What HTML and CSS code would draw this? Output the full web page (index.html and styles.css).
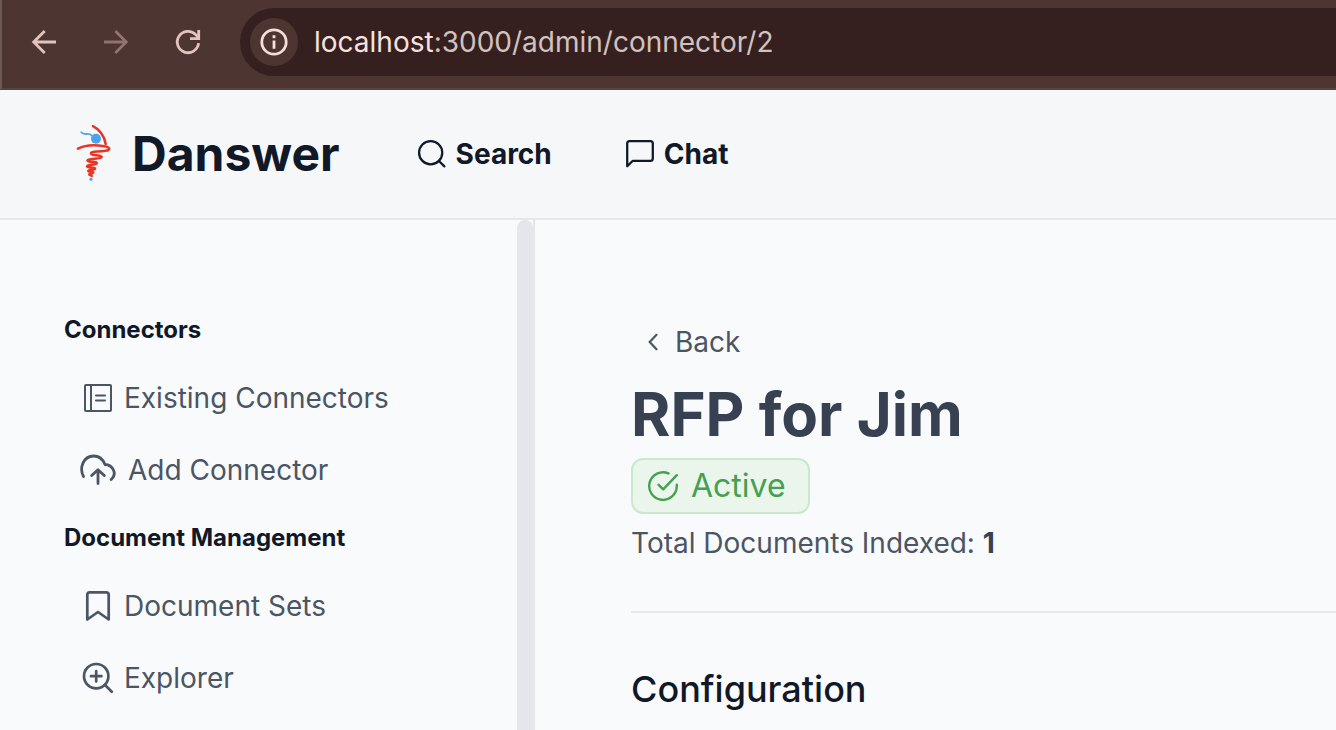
FILE: index.html
```html
<!DOCTYPE html>
<html lang="en">
<head>
<meta charset="utf-8">
<meta name="viewport" content="width=device-width, initial-scale=1">
<title>RFP for Jim - Danswer</title>
<link rel="stylesheet" href="styles.css">
</head>
<body>
<div class="browser-bar">
  <button class="browser-button" type="button" aria-label="Back">
    <svg width="28" height="28" viewBox="0 0 28 28" fill="none" stroke="currentColor" stroke-width="2.8"><path d="M26 14H4M14.700 3L3.700 14l11 11"/></svg>
  </button>
  <button class="browser-button browser-button-disabled" type="button" aria-label="Forward" disabled>
    <svg width="28" height="28" viewBox="0 0 28 28" fill="none" stroke="currentColor" stroke-width="2.8"><path d="M2 14h22M13.300 3l11 11-11 11"/></svg>
  </button>
  <button class="browser-button" type="button" aria-label="Reload">
    <svg width="28" height="28" viewBox="0 0 28 28" fill="none" stroke="currentColor" stroke-width="2.8"><path d="M24.600 15.200A10.700 10.700 0 1 1 21.700 6.600L24.500 9.500M24.700 2v8.700H16"/></svg>
  </button>
  <div class="address-bar">
    <button class="site-info" type="button" aria-label="Site information">
      <svg width="28" height="28" viewBox="0 0 28 28" fill="none" stroke="currentColor" stroke-width="2.8"><circle cx="14" cy="14" r="12.200"/><path d="M14 12.500v8.300"/><path d="M14 7.200v3"/></svg>
    </button>
    <div class="url" role="textbox" aria-label="Address" contenteditable="true" spellcheck="false"><span class="url-host">localhost</span>:3000/admin/connector/2</div>
  </div>
</div>

<header class="header">
  <a class="brand" href="#">
    <svg width="36" height="60" viewBox="0 0 36 60" fill="none" stroke-linecap="round" stroke-linejoin="round" aria-hidden="true">
      <path d="M3.300 8.300c1.500 2 3.500 1.900 5.200 1.700s3.500 0 5.500 1.600" stroke="#4ba3ee" stroke-width="1.800"/>
      <circle cx="18" cy="14.700" r="5" fill="#4ba3ee"/>
      <path d="M15 2.200C21.500 5.500 26 11.500 27.700 20" stroke="#ea3323" stroke-width="2.600"/>
      <path d="M0 24.600C7 21 18 20.800 26 22.200c7 1.200 6.500 4 1.500 4.600-5 .6-14.500.6-14.500 2.600 0 2.300 10.700 1.500 10.700 3.700 0 2.400-14.200 1-14.200 3.300 0 2.100 9.300.8 9.300 2.700 0 2.200-9.700 1.200-9.700 3.200 0 1.700 8 .8 8 2.400 0 1.500-6.800.8-6.800 2.300 0 1.200 5 .4 5 1.500s-4 .8-4 1.900c0 .9 2.400.4 2.400 1.500" stroke="#ea3323" stroke-width="2.600"/>
      <circle cx="13" cy="55.200" r="1.600" fill="#4ba3ee"/>
    </svg>
    <span class="brand-name">Danswer</span>
  </a>
  <nav class="main-nav" aria-label="Main">
    <a class="nav-link" href="#">
      <svg width="32" height="32" viewBox="0 0 24 24" fill="none" stroke="currentColor" stroke-width="1.7" stroke-linecap="round" stroke-linejoin="round"><circle cx="11" cy="11" r="8.700"/><path d="M21.300 21.300l-4.100-4.100"/></svg>
      Search
    </a>
    <a class="nav-link" href="#">
      <svg width="32" height="32" viewBox="0 0 24 24" fill="none" stroke="currentColor" stroke-width="1.7" stroke-linecap="round" stroke-linejoin="round"><path d="M21.600 15.400a1.800 1.800 0 0 1-1.800 1.800H6.400L2.400 21.200V4.100a1.800 1.800 0 0 1 1.800-1.800h15.600a1.800 1.800 0 0 1 1.800 1.800z"/></svg>
      Chat
    </a>
  </nav>
</header>

<div class="body">
  <aside class="sidebar">
    <nav class="sidebar-nav" aria-label="Admin">
      <section class="group">
        <h2 class="group-title">Connectors</h2>
        <a class="item" href="#">
          <span class="item-icon"><svg width="28" height="28" viewBox="0 0 28 28" fill="none" stroke="currentColor" stroke-width="2" stroke-linejoin="round" stroke-linecap="round"><rect x="1" y="1" width="26" height="26" rx="1"/><path d="M7 1v26M12 11.500h9M12 16.500h9"/></svg></span>
          Existing Connectors
        </a>
        <a class="item item-wide" href="#">
          <span class="item-icon"><svg width="36" height="32" viewBox="0 0 36 32" fill="none" stroke="currentColor" stroke-width="2.8" stroke-linecap="round" stroke-linejoin="round"><path d="M3.500 22.500C-1 14 3.200 2.200 13.600 2c5.500 0 9.500 3.600 11.400 8.500 8 .3 12.500 9.500 6.200 15M18 29.500V16.400M11.700 21.500l6.300-5.700 6.300 5.700"/></svg></span>
          Add Connector
        </a>
      </section>
      <section class="group">
        <h2 class="group-title">Document Management</h2>
        <a class="item" href="#">
          <span class="item-icon"><svg width="32" height="32" viewBox="0 0 32 32" fill="none" stroke="currentColor" stroke-width="2.7" stroke-linecap="round" stroke-linejoin="round"><path d="M5.300 29.500V4.800c0-1.500 1-2.500 2.500-2.500h16.400c1.500 0 2.500 1 2.500 2.500v24.700L16 22z"/></svg></span>
          Document Sets
        </a>
        <a class="item" href="#">
          <span class="item-icon"><svg width="32" height="32" viewBox="0 0 32 32" fill="none" stroke="currentColor" stroke-width="2.7" stroke-linecap="round"><circle cx="14.200" cy="14.200" r="12.200"/><path d="M23 23l6.800 6.800M14.200 9v10.400M9 14.200h10.400"/></svg></span>
          Explorer
        </a>
      </section>
    </nav>
    <div class="scroll-track" aria-hidden="true"></div>
  </aside>

  <main class="content">
    <button class="back" type="button">
      <svg width="32" height="32" viewBox="0 0 32 32" fill="none" stroke="currentColor" stroke-width="2.200" stroke-linecap="round"><path d="M19.500 8.800L12.700 16l6.800 7.200"/></svg>
      Back
    </button>
    <h1 class="title">RFP for Jim</h1>
    <div class="status">
      <svg width="32" height="32" viewBox="0 0 32 32" fill="none" stroke="currentColor" stroke-width="2.400" stroke-linecap="round" stroke-linejoin="round"><path d="M29.800 14.800v1.200A13.800 13.800 0 1 1 21.500 3.400M29.800 5.200L16.200 19.300l-4.600-4.500"/></svg>
      Active
    </div>
    <p class="total">Total Documents Indexed: <b class="total-count">1</b></p>
    <hr class="divider">
    <h2 class="subtitle">Configuration</h2>
  </main>
</div>
</body>
</html>
```

FILE: styles.css
```css
* {
  box-sizing: border-box;
}

body {
  margin: 0;
  height: 100vh;
  overflow: hidden;
  display: flex;
  flex-direction: column;
  background: #f9fafc;
  color: #4b5563;
  font-family: Inter, "Liberation Sans", sans-serif;
  font-size: 28px;
  line-height: 40px;
}

a {
  color: inherit;
  text-decoration: none;
}

button {
  padding: 0;
  border: 0;
  background: none;
  color: inherit;
  font: inherit;
}

svg {
  display: block;
  flex: none;
}

h1,
h2,
p {
  margin: 0;
}

/* Browser toolbar */
.browser-bar {
  flex: none;
  display: flex;
  align-items: center;
  gap: 44px;
  padding: 8px 0 12px 28px;
  border-left: 2px solid #6d5a58;
  border-bottom: 2px solid #534341;
  background: #4d3532;
}

.browser-button {
  color: #e5c3bd;
}

.browser-button-disabled {
  color: #8e7571;
}

.address-bar {
  flex: 1;
  display: flex;
  align-items: center;
  gap: 16px;
  margin-left: -6px;
  padding: 10px;
  border-radius: 34px 0 0 34px;
  background: #36201f;
}

.site-info {
  display: flex;
  align-items: center;
  justify-content: center;
  width: 48px;
  height: 48px;
  border-radius: 50%;
  background: #4d3532;
  color: #f5dfdb;
}

.url {
  color: #d2c2bf;
  outline: none;
}

.url-host {
  color: #f7e2de;
}

/* Application header */
.header {
  flex: none;
  display: flex;
  align-items: center;
  gap: 76px;
  padding: 32px 78px;
  border-bottom: 2px solid #e5e7eb;
  background: #f6f7f9;
  color: #111827;
}

.brand {
  display: flex;
  align-items: center;
  gap: 18px;
}

.brand svg {
  overflow: visible;
}

.brand-name {
  font-size: 48px;
  font-weight: 700;
  line-height: 64px;
}

.main-nav {
  display: flex;
  gap: 72px;
}

.nav-link {
  display: flex;
  align-items: center;
  gap: 8px;
  font-weight: 700;
}

.body {
  flex: 1;
  min-height: 0;
  display: flex;
}

/* Sidebar */
.sidebar {
  flex: none;
  display: flex;
  border-right: 2px solid #e5e7eb;
}

.sidebar-nav {
  width: 517px;
  padding: 94px 0 0 64px;
}

.scroll-track {
  width: 16px;
  border-radius: 8px 8px 0 0;
  background: #e4e6ea;
}

.group {
  padding-bottom: 16px;
}

.group-title {
  margin-bottom: 16px;
  color: #111827;
  font-size: 24px;
  font-weight: 700;
  line-height: 32px;
}

.item {
  display: flex;
  align-items: center;
  gap: 8px;
  padding: 16px;
}

.item-icon {
  display: flex;
  justify-content: center;
  width: 36px;
}

.item-wide {
  gap: 12px;
}

/* Main content */
.content {
  flex: 1;
  padding: 102px 0 0 96px;
}

.back {
  display: flex;
  align-items: center;
  gap: 6px;
  padding-left: 6px;
}

.title {
  margin-top: 16px;
  color: #374151;
  font-size: 60px;
  font-weight: 700;
  line-height: 72px;
}

.status {
  display: flex;
  align-items: center;
  gap: 12px;
  width: max-content;
  margin-top: 8px;
  padding: 6px 22px 6px 14px;
  border: 2px solid #c8e9cd;
  border-radius: 12px;
  background: #eaf5ec;
  color: #45a050;
  font-size: 32px;
}

.total {
  margin-top: 9px;
}

.total-count {
  color: #374151;
}

.divider {
  height: 2px;
  margin: 48px 0;
  border: 0;
  background: #e5e7eb;
}

.subtitle {
  color: #111827;
  font-size: 36px;
  font-weight: 500;
  line-height: 56px;
}
```
